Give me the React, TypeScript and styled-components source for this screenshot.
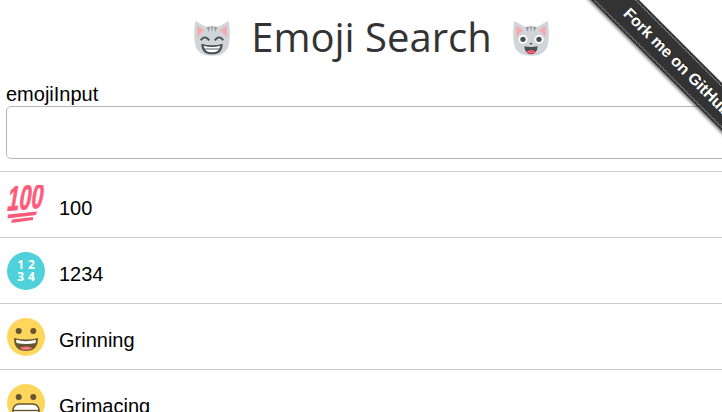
import React from 'react'
import styled, {createGlobalStyle} from 'styled-components'

const GlobalStyle = createGlobalStyle`
  html, body {
    margin: 0;
    padding: 0;
    height: 100%;
    overflow: hidden;
    background: #fff;
  }
  body {
    font-family: "Liberation Sans", Arial, sans-serif;
  }
`

const Page = styled.div`
  width: 743px;
`

const Header = styled.header`
  display: flex;
  align-items: center;
  justify-content: center;
  gap: 19px;
  height: 83px;
  padding-bottom: 10px;
  box-sizing: border-box;
`

const Title = styled.h1`
  margin: 0;
  font-family: "Open Sans", sans-serif;
  font-weight: 400;
  font-size: 40px;
  line-height: 1;
  color: #333;
`

const CatIcon = styled.svg`
  width: 40px;
  height: 40px;
  flex: none;
  margin-top: 4px;
`

const Field = styled.div`
  display: flex;
  flex-direction: column;
  padding: 0 6px;
  margin-bottom: 12px;
`

const Label = styled.label`
  font-size: 20px;
  line-height: 23px;
  color: #000;
`

const Input = styled.input`
  display: block;
  width: 100%;
  height: 53px;
  box-sizing: border-box;
  border: 1px solid #b5b5b5;
  border-radius: 5px;
  background: #fff;
  outline: none;
`

const List = styled.ul`
  margin: 0;
  padding: 0;
  list-style: none;
  border-top: 1px solid #ccc;
`

const Row = styled.li`
  display: flex;
  align-items: center;
  gap: 13px;
  height: 66px;
  box-sizing: border-box;
  padding: 0 6px;
  border-bottom: 1px solid #ccc;
`

const RowIcon = styled.svg`
  width: 40px;
  height: 40px;
  flex: none;
  margin-top: 1px;
`

const RowTitle = styled.span`
  padding-top: 8px;
  font-size: 20px;
  color: #000;
`

const Ribbon = styled.a`
  position: absolute;
  top: 45px;
  right: -105px;
  width: 300px;
  height: 34px;
  display: flex;
  align-items: center;
  justify-content: center;
  transform: rotate(45deg);
  background: #333;
  box-shadow: 0 2px 3px rgba(0, 0, 0, 0.5);
  color: #fff;
  font-family: "Liberation Sans", Arial, sans-serif;
  font-weight: 700;
  font-size: 16px;
  text-decoration: none;
  text-shadow: 0 -1px rgba(0, 0, 0, 0.5);

  &::before {
    content: '';
    position: absolute;
    inset: 2px 0;
    border-top: 1px dotted rgba(255, 255, 255, 0.7);
    border-bottom: 1px dotted rgba(255, 255, 255, 0.7);
  }
`

const CatHead = () => (
  <>
    <path
      d="M7 7 L23 16 Q32 14 41 16 L57 7 Q60 24 58 38 Q56 59 32 59 Q8 59 6 38 Q4 24 7 7Z"
      fill="#d0d5d9"
    />
    <path d="M10 14 L20 21 Q14 26 10 32Z" fill="#f7a8ad" />
    <path d="M54 14 L44 21 Q50 26 54 32Z" fill="#f7a8ad" />
    <path
      d="M24 16 L27 23 L29 15.500Z M30.500 15 L32 24 L33.500 15Z M35 15.500 L37 23 L40 16Z"
      fill="#94989b"
    />
  </>
)

const GrinCat = () => (
  <CatIcon viewBox="2 4 60 60">
    <CatHead />
    <path
      d="M15 36 Q21 27 28 36 M36 36 Q43 27 49 36"
      fill="none"
      stroke="#4a4f52"
      strokeWidth="2.8"
    />
    <path d="M16 41 Q32 46 48 41 Q48 57 32 57 Q16 57 16 41Z" fill="#4a4f52" />
    <path d="M19.500 44 Q32 48 44.500 44 Q43 54 32 54 Q21 54 19.500 44Z" fill="#fff" />
    <path d="M19.500 49 H44.500" stroke="#4a4f52" strokeWidth="1.400" />
  </CatIcon>
)

const OpenCat = () => (
  <CatIcon viewBox="2 4 60 60">
    <CatHead />
    <circle cx="20" cy="34.500" r="6.800" fill="#fff" />
    <circle cx="44" cy="34.500" r="6.800" fill="#fff" />
    <circle cx="20" cy="34.500" r="4" fill="#4a4f52" />
    <circle cx="44" cy="34.500" r="4" fill="#4a4f52" />
    <path d="M22 45 Q32 47 42 45 Q41 57 32 57 Q23 57 22 45Z" fill="#4a4f52" />
    <path d="M24.500 53 Q32 48 39.500 53 Q36 56 32 56 Q28 56 24.500 53Z" fill="#ff5a70" />
    <path d="M29.500 40 H34.500 L32 43Z" fill="#4a4f52" />
  </CatIcon>
)

const HundredIcon = () => (
  <RowIcon viewBox="0 0 40 40">
    <text
      x="0"
      y="24"
      fontFamily="Liberation Sans, sans-serif"
      fontWeight="700"
      fontStyle="italic"
      fontSize="34"
      textLength="36"
      lengthAdjust="spacingAndGlyphs"
      fill="#ff5a79"
      stroke="#ff5a79"
      strokeWidth="0.7"
      transform="rotate(-5 20 14) translate(3.500 0) skewX(-8)"
    >
      100
    </text>
    <path d="M2 29.500 L31 26.500 L30 30 L1.500 33.500Z" fill="#ff5a79" />
    <path d="M5.700 34.500 L27 32 L27 35 L5.500 38Z" fill="#ff5a79" />
  </RowIcon>
)

const NumbersIcon = () => (
  <RowIcon viewBox="0 0 40 40">
    <circle cx="20" cy="20" r="19" fill="#4fd1d9" />
    <text
      x="22"
      y="18"
      textAnchor="middle"
      fontFamily="Open Sans, sans-serif"
      fontWeight="700"
      fontSize="12"
      letterSpacing="4"
      fill="#fff"
    >
      12
    </text>
    <text
      x="22"
      y="30"
      textAnchor="middle"
      fontFamily="Open Sans, sans-serif"
      fontWeight="700"
      fontSize="12"
      letterSpacing="4"
      fill="#fff"
    >
      34
    </text>
  </RowIcon>
)

const GrinningIcon = () => (
  <RowIcon viewBox="0 0 40 40">
    <circle cx="20" cy="20" r="19" fill="#ffd65c" />
    <circle cx="12.700" cy="14" r="3" fill="#665532" />
    <circle cx="27.300" cy="14" r="3" fill="#665532" />
    <path d="M8 21 Q20 24 32 21 Q32 34 20 34 Q8 34 8 21Z" fill="#665532" />
    <path d="M10 22.800 Q20 25.500 30 22.800 L29.500 26 Q20 28 10.500 26Z" fill="#fff" />
    <path d="M13.500 31 Q20 28 26.500 31 Q24 33 20 33 Q16 33 13.500 31Z" fill="#ff717f" />
  </RowIcon>
)

const GrimacingIcon = () => (
  <RowIcon viewBox="0 0 40 40">
    <circle cx="20" cy="20" r="19" fill="#ffd65c" />
    <circle cx="12.700" cy="14" r="3" fill="#665532" />
    <circle cx="27.300" cy="14" r="3" fill="#665532" />
    <rect x="7" y="21" width="26" height="13" rx="6" fill="#fff" stroke="#665532" strokeWidth="1.600" />
    <path d="M7 27.500 H33" stroke="#665532" strokeWidth="1.400" />
  </RowIcon>
)

const emojis = [
  {title: '100', icon: <HundredIcon />},
  {title: '1234', icon: <NumbersIcon />},
  {title: 'Grinning', icon: <GrinningIcon />},
  {title: 'Grimacing', icon: <GrimacingIcon />},
]

export default function App() {
  return (
    <>
      <GlobalStyle />
      <Page>
        <Header>
          <GrinCat />
          <Title>Emoji Search</Title>
          <OpenCat />
        </Header>
        <Field>
          <Label htmlFor="emojiInput">emojiInput</Label>
          <Input id="emojiInput" />
        </Field>
        <List>
          {emojis.map((emoji) => (
            <Row key={emoji.title}>
              {emoji.icon}
              <RowTitle>{emoji.title}</RowTitle>
            </Row>
          ))}
        </List>
      </Page>
      <Ribbon href="#">Fork me on GitHub</Ribbon>
    </>
  )
}
